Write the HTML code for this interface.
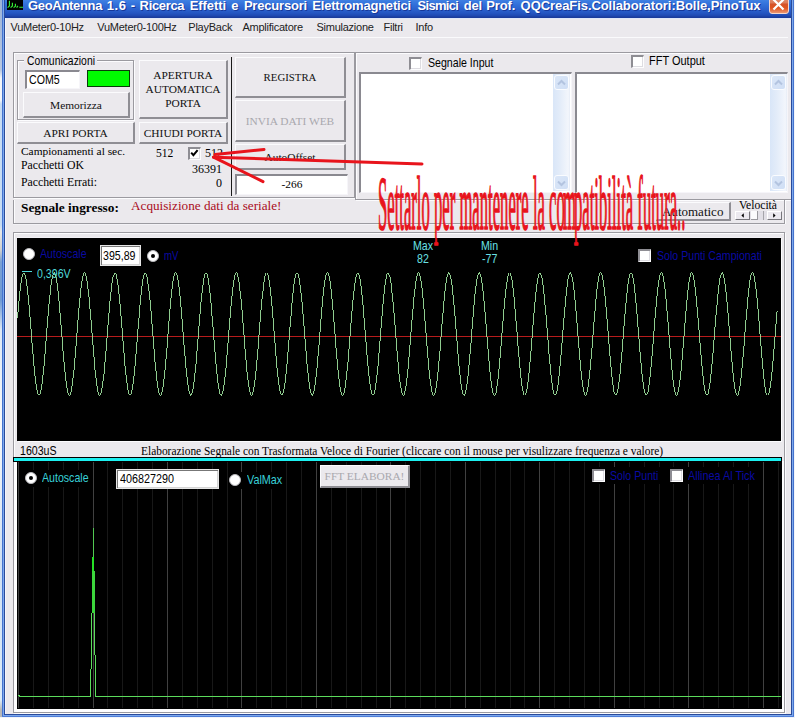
<!DOCTYPE html>
<html>
<head>
<meta charset="utf-8">
<title>GeoAntenna</title>
<style>
html,body{margin:0;padding:0;}
body{width:795px;height:718px;overflow:hidden;position:relative;background:#ebe9ed;font-family:"Liberation Sans",sans-serif;font-size:11px;color:#000;}
.a{position:absolute;box-sizing:border-box;}
.t{position:absolute;white-space:nowrap;line-height:1;}
.ms{font-size:12.4px;transform-origin:0 0;transform:scaleX(0.856);}
.sf{font-family:"Liberation Serif",serif;}
.btn{position:absolute;box-sizing:border-box;background:#ebe9ed;border-top:1px solid #fbfbfd;border-left:1px solid #fbfbfd;border-right:2px solid #8f8e94;border-bottom:2px solid #8f8e94;font-family:"Liberation Serif",serif;font-size:11.4px;text-align:center;color:#111;}
.btn span{position:absolute;left:0;right:0;text-align:center;line-height:14px;}
.sunk{position:absolute;box-sizing:border-box;background:#fff;border-top:2px solid #8a8990;border-left:2px solid #8a8990;border-right:1px solid #f6f5f9;border-bottom:1px solid #f6f5f9;}
.et{position:absolute;box-sizing:border-box;border:1px solid #9b9aa0;box-shadow:1px 1px 0 #fcfcfe, inset 1px 1px 0 #fcfcfe;}
.sb{background:linear-gradient(90deg,#d9e6f8 0%,#e3ecf9 40%,#f3f6fc 90%,#e6ecf6 100%);}
.sbb{width:15px;height:15px;border:1px solid #fafcff;border-radius:3px;background:linear-gradient(135deg,#dbe7f8,#cfdef5);}
.cb{position:absolute;box-sizing:border-box;width:13px;height:13px;background:#fff;border-top:2px solid #8e8d93;border-left:2px solid #8e8d93;border-right:1px solid #fdfdfe;border-bottom:1px solid #fdfdfe;box-shadow:inset -1px -1px 0 #dddce1;}
.rd{position:absolute;box-sizing:border-box;width:12px;height:12px;border-radius:50%;background:#fff;border:1.5px solid #b9b9bd;}
.rd.on:after{content:"";position:absolute;left:2.5px;top:2.5px;width:4px;height:4px;border-radius:50%;background:#000;}
</style>
</head>
<body>
<!-- desktop strip left/right/bottom -->
<div class="a" id="deskL" style="left:0;top:0;width:2px;height:718px;background:linear-gradient(#9db4d8 0,#b9c8e2 70px,#f4f6fa 78px,#f4f6fa 100px,#c7dcf4 104px,#c7dcf4 225px,#e8e8e8 232px,#d0d0d0 250px,#7aa0d4 262px,#6f9ad4 300px,#dfe9f6 330px,#f6f8fb 420px,#e4ecf6 500px,#cfe0f4 560px,#dcebf8 700px,#b8b8b8 710px);"></div>
<div class="a" id="deskR" style="left:794px;top:0;width:1px;height:718px;background:#f1f4f9;"></div>
<div class="a" id="deskB" style="left:0;top:717px;width:795px;height:1px;background:#f1f4f9;"></div>

<!-- title bar -->
<div class="a" id="title" style="left:5px;top:0;width:786px;height:18px;background:linear-gradient(#3f80e3 0px,#3372db 4px,#2b62ce 9px,#2456c2 13px,#1e48b0 16px,#1a3c9c 17px,#1a3c9c 18px);"></div>
<div class="a" id="icon" style="left:7px;top:0;width:16px;height:10px;background:#000;"></div>
<svg class="a" style="left:7px;top:0;" width="16" height="10" viewBox="7 0 16 10"><path d="M9.4,0.8 L9.4,6 L7.6,7.6 M12.4,2.8 L12.4,6 L10.6,7.6 M15.4,3.8 L15.4,6.2 L13.6,7.6 M17.9,5.8 L16.6,7.6 M19.3,7.2 L23,7.2" stroke="#36f036" stroke-width="1.15" fill="none"/></svg>
<div class="t" id="ttext" style="left:28px;top:-1px;width:740px;height:14px;font-size:13px;font-weight:bold;color:#fff;text-shadow:1px 1px 0 #16389a;"><span style="position:absolute;left:0.0px;top:0;letter-spacing:-0.320px;">GeoAntenna</span><span style="position:absolute;left:78.7px;top:0;letter-spacing:0.567px;">1.6</span><span style="position:absolute;left:102.8px;top:0;letter-spacing:-0.400px;">-</span><span style="position:absolute;left:111.6px;top:0;letter-spacing:-0.329px;">Ricerca</span><span style="position:absolute;left:161.8px;top:0;letter-spacing:-0.100px;">Effetti</span><span style="position:absolute;left:203.3px;top:0;letter-spacing:-0.700px;">e</span><span style="position:absolute;left:215.9px;top:0;letter-spacing:-0.200px;">Precursori</span><span style="position:absolute;left:284.3px;top:0;letter-spacing:-0.206px;">Elettromagnetici</span><span style="position:absolute;left:389.6px;top:0;letter-spacing:-0.714px;">Sismici</span><span style="position:absolute;left:435.7px;top:0;letter-spacing:-0.167px;">del</span><span style="position:absolute;left:458.3px;top:0;letter-spacing:-0.120px;">Prof.</span><span style="position:absolute;left:492.6px;top:0;letter-spacing:-0.070px;">QQCreaFis.Collaboratori:Bolle,PinoTux</span></div>
<div class="a" id="close" style="left:769px;top:-1px;width:20px;height:15px;background:linear-gradient(#e08868 0,#dc7a58 3px,#d4522a 4px,#e0541f 8px,#e88a62 12px,#eea88c 15px);border:1px solid #f5d6ca;border-radius:0 0 3px 3px;"></div>
<svg class="a" style="left:769px;top:0;" width="20" height="14" viewBox="0 0 20 14"><path d="M4 -1 L14.5 9.5 M15 -1 L4.5 9.5" stroke="#fff" stroke-width="2.2" fill="none"/></svg>

<!-- menu -->
<div class="a" style="left:5px;top:18px;width:786px;height:1px;background:#dfe7f8;"></div>
<div class="t" style="left:10.5px;top:22px;font-size:11px;color:#222;letter-spacing:-0.25px;">VuMeter0-10Hz</div>
<div class="t" style="left:97.3px;top:22px;font-size:11px;color:#222;letter-spacing:-0.25px;">VuMeter0-100Hz</div>
<div class="t" style="left:188.3px;top:22px;font-size:11px;color:#222;letter-spacing:-0.25px;">PlayBack</div>
<div class="t" style="left:242.5px;top:22px;font-size:11px;color:#222;letter-spacing:-0.25px;">Amplificatore</div>
<div class="t" style="left:316.5px;top:22px;font-size:11px;color:#222;letter-spacing:-0.25px;">Simulazione</div>
<div class="t" style="left:383.5px;top:22px;font-size:11px;color:#222;letter-spacing:-0.25px;">Filtri</div>
<div class="t" style="left:415.5px;top:22px;font-size:11px;color:#222;letter-spacing:-0.25px;">Info</div>
<div class="a" style="left:6px;top:37px;width:782px;height:1px;background:#fafafc;"></div>

<!-- ===== top-left panel ===== -->
<div class="et" id="pL" style="left:13px;top:52px;width:342px;height:146px;"></div>
<!-- groupbox -->
<div class="et" style="left:17px;top:60px;width:117px;height:60px;"></div>
<div class="a" style="left:24px;top:58px;width:73px;height:6px;background:#ebe9ed;"></div><div class="t ms" style="left:27px;top:55px;transform:scaleX(0.836);">Comunicazioni</div>
<div class="sunk" style="left:25px;top:70px;width:55px;height:19px;"></div>
<div class="t ms" style="left:29px;top:74px;">COM5</div>
<div class="a" style="left:87px;top:70px;width:43px;height:17px;background:#00fb00;border:1px solid #0a3a0a;"></div>
<div class="btn" style="left:23px;top:92px;width:107px;height:26px;"><span style="top:5px;">Memorizza</span></div>
<div class="btn" style="left:139px;top:60px;width:89px;height:59px;"><span style="top:7px;">APERTURA<br>AUTOMATICA<br>PORTA</span></div>
<div class="btn" style="left:17px;top:122px;width:118px;height:22px;"><span style="top:2.8px;">APRI PORTA</span></div>
<div class="btn" style="left:139px;top:122px;width:89px;height:22px;"><span style="top:2.8px;">CHIUDI PORTA</span></div>
<div class="a" style="left:231px;top:57px;width:1px;height:139px;background:#1a1a1a;"></div>
<div class="btn" style="left:235px;top:57px;width:111px;height:41px;"><span style="top:11.6px;font-size:10.8px;">REGISTRA</span></div>
<div class="btn" style="left:235px;top:100px;width:111px;height:42px;color:#a9a8ad;"><span style="top:12.5px;">INVIA DATI WEB</span></div>
<div class="btn" style="left:235px;top:144px;width:111px;height:26px;"><span style="top:5px;">AutoOffset</span></div>
<div class="sunk" style="left:235px;top:174px;width:113px;height:21px;"></div>
<div class="t sf" style="left:236px;width:112px;text-align:center;top:179px;font-size:11.4px;">-266</div>

<div class="t sf" style="left:21px;top:146px;font-size:11.4px;">Campionamenti al sec.</div>
<div class="t sf" style="left:156px;top:148px;font-size:11.6px;">512</div>
<div class="cb" style="left:188px;top:147px;"></div>
<svg class="a" style="left:188px;top:147px;" width="12" height="12" viewBox="0 0 12 12"><path d="M3.2 5.6 L5.4 8.2 L9.6 3.2" stroke="#000" stroke-width="2" fill="none"/></svg>
<div class="t sf" style="left:205px;top:147px;font-size:12px;">512</div>
<div class="t sf" style="left:21px;top:160px;font-size:11.75px;">Pacchetti OK</div>
<div class="t sf" style="left:150px;width:72px;text-align:right;top:163px;font-size:12px;">36391</div>
<div class="t sf" style="left:21px;top:176.5px;font-size:11.75px;">Pacchetti Errati:</div>
<div class="t sf" style="left:150px;width:72px;text-align:right;top:177px;font-size:12px;">0</div>

<!-- ===== top-right panel ===== -->
<div class="et" id="pR" style="left:355px;top:52px;width:438px;height:148px;"></div>
<div class="cb" style="left:409px;top:57px;"></div>
<div class="t ms" style="left:427.5px;top:57px;">Segnale Input</div>
<div class="cb" style="left:631px;top:55px;"></div>
<div class="t ms" style="left:649px;top:55px;transform:scaleX(0.886);">FFT Output</div>
<div class="sunk" id="ta1" style="left:359px;top:72px;width:213px;height:121px;"></div>
<div class="sunk" id="ta2" style="left:575px;top:72px;width:213px;height:121px;"></div>
<div class="a sb" style="left:553px;top:74px;width:17px;height:117px;">
<div class="a sbb" style="left:1px;top:1px;"><svg width="13" height="14" viewBox="0 0 13 14"><path d="M3 8.5 L6.5 5 L10 8.5" stroke="#b3c4e0" stroke-width="2" fill="none"/></svg></div>
<div class="a sbb" style="left:1px;top:101px;"><svg width="13" height="14" viewBox="0 0 13 14"><path d="M3 5.5 L6.5 9 L10 5.5" stroke="#b3c4e0" stroke-width="2" fill="none"/></svg></div>
</div>
<div class="a sb" style="left:770px;top:74px;width:17px;height:117px;">
<div class="a sbb" style="left:1px;top:1px;"><svg width="13" height="14" viewBox="0 0 13 14"><path d="M3 8.5 L6.5 5 L10 8.5" stroke="#b3c4e0" stroke-width="2" fill="none"/></svg></div>
<div class="a sbb" style="left:1px;top:101px;"><svg width="13" height="14" viewBox="0 0 13 14"><path d="M3 5.5 L6.5 9 L10 5.5" stroke="#b3c4e0" stroke-width="2" fill="none"/></svg></div>
</div>

<!-- ===== status row ===== -->
<div class="et" id="pS" style="left:13px;top:200px;width:772px;height:24px;border-top:none;box-shadow:1px 0 0 #fcfcfe, 0 1px 0 #f3f2f6, inset 1px 0 0 #fcfcfe;"></div>
<div class="t sf" style="left:21px;top:201px;font-size:13.33px;font-weight:bold;">Segnale ingresso:</div>
<div class="t sf" style="left:131px;top:199px;font-size:13.2px;color:#aa0c1c;">Acquisizione dati da seriale!</div>
<div class="btn" style="left:656px;top:202px;width:75px;height:19px;font-size:13px;"><span style="top:1.5px;left:5px;right:auto;">Automatico</span></div>
<div class="t sf" style="left:739px;top:200px;font-size:11.6px;">Velocità</div>
<div class="a" id="slider" style="left:735px;top:211px;width:47px;height:9px;background:#e1dfe6;">
<div class="a" style="left:0;top:0;width:15px;height:9px;background:#ebe9ef;border-top:1px solid #fff;border-left:1px solid #fff;border-right:1px solid #77767c;border-bottom:1px solid #77767c;"></div>
<div class="a" style="left:32px;top:0;width:15px;height:9px;background:#ebe9ef;border-top:1px solid #fff;border-left:1px solid #fff;border-right:1px solid #77767c;border-bottom:1px solid #77767c;"></div>
<div class="a" style="left:16px;top:0;width:7px;height:9px;background:#fbfbfd;border-right:1px solid #9a999f;border-bottom:1px solid #9a999f;"></div>
<div class="a" style="left:28px;top:0;width:1px;height:9px;background:#a5a4aa;"></div>
<svg class="a" style="left:0;top:0;" width="47" height="9" viewBox="0 0 47 9"><path d="M8.8 2.3 L6.4 4.5 L8.8 6.7 Z M38.2 2.3 L40.6 4.5 L38.2 6.7 Z" fill="#000"/></svg>
</div>

<!-- ===== scope container ===== -->
<div class="et" id="scopeBox" style="left:13px;top:232px;width:772px;height:481px;"></div>
<div class="a" id="scope1" style="left:17px;top:238px;width:764px;height:203px;background:#000;box-shadow:1px 1px 0 #fbfbfd,0 -1px 0 #f1f0f5;"></div>
<div class="a" id="fftwhite" style="left:14px;top:461px;width:770px;height:251px;background:#fdfdfe;"></div>
<div class="a" id="scope2" style="left:17px;top:461px;width:765px;height:248px;background:#000;"></div>
<div class="a" id="cyan" style="left:13px;top:457px;width:769px;height:5px;background:#1cf0f0;border:1px solid #000;"></div>
<div class="t ms" style="left:19.5px;top:445px;">1603uS</div>
<div class="t sf" style="left:141px;top:446px;font-size:11.41px;">Elaborazione Segnale con Trasformata Veloce di Fourier (cliccare con il mouse per visulizzare frequenza e valore)</div>

<svg class="a" id="plots" style="left:0;top:0;" width="795" height="718" viewBox="0 0 795 718">
<g shape-rendering="crispEdges" stroke-width="1">
<line x1="18.5" y1="462" x2="18.5" y2="708" stroke="#404040"/>
<line x1="33.5" y1="462" x2="33.5" y2="708" stroke="#181818"/>
<line x1="48.5" y1="462" x2="48.5" y2="708" stroke="#181818"/>
<line x1="63.5" y1="462" x2="63.5" y2="708" stroke="#181818"/>
<line x1="78.5" y1="462" x2="78.5" y2="708" stroke="#181818"/>
<line x1="93.5" y1="462" x2="93.5" y2="708" stroke="#404040"/>
<line x1="107.5" y1="462" x2="107.5" y2="708" stroke="#181818"/>
<line x1="122.5" y1="462" x2="122.5" y2="708" stroke="#181818"/>
<line x1="137.5" y1="462" x2="137.5" y2="708" stroke="#181818"/>
<line x1="152.5" y1="462" x2="152.5" y2="708" stroke="#181818"/>
<line x1="167.5" y1="462" x2="167.5" y2="708" stroke="#404040"/>
<line x1="182.5" y1="462" x2="182.5" y2="708" stroke="#181818"/>
<line x1="197.5" y1="462" x2="197.5" y2="708" stroke="#181818"/>
<line x1="212.5" y1="462" x2="212.5" y2="708" stroke="#181818"/>
<line x1="227.5" y1="462" x2="227.5" y2="708" stroke="#181818"/>
<line x1="241.5" y1="462" x2="241.5" y2="708" stroke="#404040"/>
<line x1="256.5" y1="462" x2="256.5" y2="708" stroke="#181818"/>
<line x1="271.5" y1="462" x2="271.5" y2="708" stroke="#181818"/>
<line x1="286.5" y1="462" x2="286.5" y2="708" stroke="#181818"/>
<line x1="301.5" y1="462" x2="301.5" y2="708" stroke="#181818"/>
<line x1="316.5" y1="462" x2="316.5" y2="708" stroke="#404040"/>
<line x1="331.5" y1="462" x2="331.5" y2="708" stroke="#181818"/>
<line x1="346.5" y1="462" x2="346.5" y2="708" stroke="#181818"/>
<line x1="361.5" y1="462" x2="361.5" y2="708" stroke="#181818"/>
<line x1="376.5" y1="462" x2="376.5" y2="708" stroke="#181818"/>
<line x1="390.5" y1="462" x2="390.5" y2="708" stroke="#404040"/>
<line x1="405.5" y1="462" x2="405.5" y2="708" stroke="#181818"/>
<line x1="420.5" y1="462" x2="420.5" y2="708" stroke="#181818"/>
<line x1="435.5" y1="462" x2="435.5" y2="708" stroke="#181818"/>
<line x1="450.5" y1="462" x2="450.5" y2="708" stroke="#181818"/>
<line x1="465.5" y1="462" x2="465.5" y2="708" stroke="#404040"/>
<line x1="480.5" y1="462" x2="480.5" y2="708" stroke="#181818"/>
<line x1="495.5" y1="462" x2="495.5" y2="708" stroke="#181818"/>
<line x1="510.5" y1="462" x2="510.5" y2="708" stroke="#181818"/>
<line x1="524.5" y1="462" x2="524.5" y2="708" stroke="#181818"/>
<line x1="539.5" y1="462" x2="539.5" y2="708" stroke="#404040"/>
<line x1="554.5" y1="462" x2="554.5" y2="708" stroke="#181818"/>
<line x1="569.5" y1="462" x2="569.5" y2="708" stroke="#181818"/>
<line x1="584.5" y1="462" x2="584.5" y2="708" stroke="#181818"/>
<line x1="599.5" y1="462" x2="599.5" y2="708" stroke="#181818"/>
<line x1="614.5" y1="462" x2="614.5" y2="708" stroke="#404040"/>
<line x1="629.5" y1="462" x2="629.5" y2="708" stroke="#181818"/>
<line x1="644.5" y1="462" x2="644.5" y2="708" stroke="#181818"/>
<line x1="659.5" y1="462" x2="659.5" y2="708" stroke="#181818"/>
<line x1="673.5" y1="462" x2="673.5" y2="708" stroke="#181818"/>
<line x1="688.5" y1="462" x2="688.5" y2="708" stroke="#404040"/>
<line x1="703.5" y1="462" x2="703.5" y2="708" stroke="#181818"/>
<line x1="718.5" y1="462" x2="718.5" y2="708" stroke="#181818"/>
<line x1="733.5" y1="462" x2="733.5" y2="708" stroke="#181818"/>
<line x1="748.5" y1="462" x2="748.5" y2="708" stroke="#181818"/>
<line x1="763.5" y1="462" x2="763.5" y2="708" stroke="#404040"/>
<line x1="778.5" y1="462" x2="778.5" y2="708" stroke="#181818"/>
<line x1="17" y1="336.5" x2="781" y2="336.5" stroke="#b81c1c"/>
<rect x="93" y="528" width="1" height="29" fill="#52c852"/>
<rect x="92" y="557" width="2" height="14" fill="#25e025"/>
<rect x="92" y="571" width="3" height="42" fill="#3cd63c"/>
<rect x="91" y="613" width="1" height="56" fill="#5cdc5c"/>
<rect x="90" y="669" width="1" height="28" fill="#5cdc5c"/>
<rect x="94" y="613" width="1" height="42" fill="#5cdc5c"/>
<rect x="95" y="655" width="1" height="42" fill="#5cdc5c"/>
<rect x="19" y="696" width="72" height="1" fill="#5cdc5c"/>
<rect x="95" y="696" width="686" height="1" fill="#5cdc5c"/>
<rect x="18" y="695" width="2" height="1" fill="#5cdc5c"/>
</g>
<path id="sine" d="M17.5,317.8 L18.1,310.6 L18.7,303.8 L19.3,297.4 L19.9,291.6 L20.5,286.4 L21.1,282.0 L21.7,278.4 L22.3,275.6 L22.9,273.8 L23.5,272.8 L24.1,272.8 L24.7,273.8 L25.3,275.6 L25.9,278.4 L26.5,282.0 L27.1,286.4 L27.7,291.6 L28.3,297.4 L28.9,303.8 L29.5,310.6 L30.1,317.8 L30.7,325.3 L31.3,332.9 L31.9,340.5 L32.5,348.0 L33.1,355.2 L33.7,362.2 L34.3,368.7 L34.9,374.7 L35.5,380.1 L36.1,384.7 L36.7,388.6 L37.3,391.6 L37.9,393.8 L38.5,395.0 L39.1,395.3 L39.7,394.6 L40.3,393.0 L40.9,390.5 L41.5,387.2 L42.1,383.0 L42.7,378.0 L43.3,372.4 L43.9,366.2 L44.5,359.5 L45.1,352.4 L45.7,345.0 L46.3,337.4 L46.9,329.8 L47.5,322.3 L48.1,314.9 L48.7,307.8 L49.3,301.2 L49.9,295.0 L50.5,289.5 L51.1,284.6 L51.7,280.5 L52.3,277.2 L52.9,274.8 L53.5,273.3 L54.1,272.7 L54.7,273.1 L55.3,274.4 L55.9,276.6 L56.5,279.7 L57.1,283.7 L57.7,288.4 L58.3,293.9 L58.9,299.9 L59.5,306.5 L60.1,313.5 L60.7,320.8 L61.3,328.3 L61.9,335.9 L62.5,343.5 L63.1,350.9 L63.7,358.1 L64.3,364.9 L64.9,371.2 L65.5,376.9 L66.1,382.0 L66.7,386.4 L67.3,389.9 L67.9,392.6 L68.5,394.4 L69.1,395.2 L69.7,395.1 L70.3,394.1 L70.9,392.1 L71.5,389.3 L72.1,385.6 L72.7,381.1 L73.3,375.8 L73.9,370.0 L74.5,363.5 L75.1,356.7 L75.7,349.4 L76.3,342.0 L76.9,334.4 L77.5,326.8 L78.1,319.3 L78.7,312.0 L79.3,305.1 L79.9,298.6 L80.5,292.7 L81.1,287.4 L81.7,282.8 L82.3,279.1 L82.9,276.1 L83.5,274.1 L84.1,272.9 L84.7,272.7 L85.3,273.5 L85.9,275.2 L86.5,277.8 L87.1,281.2 L87.7,285.5 L88.3,290.5 L88.9,296.2 L89.5,302.5 L90.1,309.2 L90.7,316.4 L91.3,323.8 L91.9,331.3 L92.5,338.9 L93.1,346.5 L93.7,353.8 L94.3,360.8 L94.9,367.5 L95.5,373.6 L96.1,379.1 L96.7,383.9 L97.3,387.9 L97.9,391.1 L98.5,393.4 L99.1,394.8 L99.7,395.3 L100.3,394.8 L100.9,393.4 L101.5,391.1 L102.1,387.9 L102.7,383.9 L103.3,379.1 L103.9,373.6 L104.5,367.5 L105.1,360.8 L105.7,353.8 L106.3,346.5 L106.9,338.9 L107.5,331.3 L108.1,323.8 L108.7,316.4 L109.3,309.2 L109.9,302.5 L110.5,296.2 L111.1,290.5 L111.7,285.5 L112.3,281.2 L112.9,277.8 L113.5,275.2 L114.1,273.5 L114.7,272.7 L115.3,272.9 L115.9,274.1 L116.5,276.1 L117.1,279.1 L117.7,282.8 L118.3,287.4 L118.9,292.7 L119.5,298.6 L120.1,305.1 L120.7,312.0 L121.3,319.3 L121.9,326.8 L122.5,334.4 L123.1,342.0 L123.7,349.4 L124.3,356.7 L124.9,363.5 L125.5,370.0 L126.1,375.8 L126.7,381.1 L127.3,385.6 L127.9,389.3 L128.5,392.1 L129.1,394.1 L129.7,395.1 L130.3,395.2 L130.9,394.4 L131.5,392.6 L132.1,389.9 L132.7,386.4 L133.3,382.0 L133.9,376.9 L134.5,371.2 L135.1,364.9 L135.7,358.1 L136.3,350.9 L136.9,343.5 L137.5,335.9 L138.1,328.3 L138.7,320.8 L139.3,313.5 L139.9,306.5 L140.5,299.9 L141.1,293.9 L141.7,288.4 L142.3,283.7 L142.9,279.7 L143.5,276.6 L144.1,274.4 L144.7,273.1 L145.3,272.7 L145.9,273.3 L146.5,274.8 L147.1,277.2 L147.7,280.5 L148.3,284.6 L148.9,289.5 L149.5,295.0 L150.1,301.2 L150.7,307.8 L151.3,314.9 L151.9,322.3 L152.5,329.8 L153.1,337.4 L153.7,345.0 L154.3,352.4 L154.9,359.5 L155.5,366.2 L156.1,372.4 L156.7,378.0 L157.3,383.0 L157.9,387.2 L158.5,390.5 L159.1,393.0 L159.7,394.6 L160.3,395.3 L160.9,395.0 L161.5,393.8 L162.1,391.6 L162.7,388.6 L163.3,384.7 L163.9,380.1 L164.5,374.7 L165.1,368.7 L165.7,362.2 L166.3,355.2 L166.9,348.0 L167.5,340.5 L168.1,332.9 L168.7,325.3 L169.3,317.8 L169.9,310.6 L170.5,303.8 L171.1,297.4 L171.7,291.6 L172.3,286.4 L172.9,282.0 L173.5,278.4 L174.1,275.6 L174.7,273.8 L175.3,272.8 L175.9,272.8 L176.5,273.8 L177.1,275.6 L177.7,278.4 L178.3,282.0 L178.9,286.4 L179.5,291.6 L180.1,297.4 L180.7,303.8 L181.3,310.6 L181.9,317.8 L182.5,325.3 L183.1,332.9 L183.7,340.5 L184.3,348.0 L184.9,355.2 L185.5,362.2 L186.1,368.7 L186.7,374.7 L187.3,380.1 L187.9,384.7 L188.5,388.6 L189.1,391.6 L189.7,393.8 L190.3,395.0 L190.9,395.3 L191.5,394.6 L192.1,393.0 L192.7,390.5 L193.3,387.2 L193.9,383.0 L194.5,378.0 L195.1,372.4 L195.7,366.2 L196.3,359.5 L196.9,352.4 L197.5,345.0 L198.1,337.4 L198.7,329.8 L199.3,322.3 L199.9,314.9 L200.5,307.8 L201.1,301.2 L201.7,295.0 L202.3,289.5 L202.9,284.6 L203.5,280.5 L204.1,277.2 L204.7,274.8 L205.3,273.3 L205.9,272.7 L206.5,273.1 L207.1,274.4 L207.7,276.6 L208.3,279.7 L208.9,283.7 L209.5,288.4 L210.1,293.9 L210.7,299.9 L211.3,306.5 L211.9,313.5 L212.5,320.8 L213.1,328.3 L213.7,335.9 L214.3,343.5 L214.9,350.9 L215.5,358.1 L216.1,364.9 L216.7,371.2 L217.3,376.9 L217.9,382.0 L218.5,386.4 L219.1,389.9 L219.7,392.6 L220.3,394.4 L220.9,395.2 L221.5,395.1 L222.1,394.1 L222.7,392.1 L223.3,389.3 L223.9,385.6 L224.5,381.1 L225.1,375.8 L225.7,370.0 L226.3,363.5 L226.9,356.7 L227.5,349.4 L228.1,342.0 L228.7,334.4 L229.3,326.8 L229.9,319.3 L230.5,312.0 L231.1,305.1 L231.7,298.6 L232.3,292.7 L232.9,287.4 L233.5,282.8 L234.1,279.1 L234.7,276.1 L235.3,274.1 L235.9,272.9 L236.5,272.7 L237.1,273.5 L237.7,275.2 L238.3,277.8 L238.9,281.2 L239.5,285.5 L240.1,290.5 L240.7,296.2 L241.3,302.5 L241.9,309.2 L242.5,316.4 L243.1,323.8 L243.7,331.3 L244.3,338.9 L244.9,346.5 L245.5,353.8 L246.1,360.8 L246.7,367.5 L247.3,373.6 L247.9,379.1 L248.5,383.9 L249.1,387.9 L249.7,391.1 L250.3,393.4 L250.9,394.8 L251.5,395.3 L252.1,394.8 L252.7,393.4 L253.3,391.1 L253.9,387.9 L254.5,383.9 L255.1,379.1 L255.7,373.6 L256.3,367.5 L256.9,360.8 L257.5,353.8 L258.1,346.5 L258.7,338.9 L259.3,331.3 L259.9,323.8 L260.5,316.4 L261.1,309.2 L261.7,302.5 L262.3,296.2 L262.9,290.5 L263.5,285.5 L264.1,281.2 L264.7,277.8 L265.3,275.2 L265.9,273.5 L266.5,272.7 L267.1,272.9 L267.7,274.1 L268.3,276.1 L268.9,279.1 L269.5,282.8 L270.1,287.4 L270.7,292.7 L271.3,298.6 L271.9,305.1 L272.5,312.0 L273.1,319.3 L273.7,326.8 L274.3,334.4 L274.9,342.0 L275.5,349.4 L276.1,356.7 L276.7,363.5 L277.3,370.0 L277.9,375.8 L278.5,381.1 L279.1,385.6 L279.7,389.3 L280.3,392.1 L280.9,394.1 L281.5,395.1 L282.1,395.2 L282.7,394.4 L283.3,392.6 L283.9,389.9 L284.5,386.4 L285.1,382.0 L285.7,376.9 L286.3,371.2 L286.9,364.9 L287.5,358.1 L288.1,350.9 L288.7,343.5 L289.3,335.9 L289.9,328.3 L290.5,320.8 L291.1,313.5 L291.7,306.5 L292.3,299.9 L292.9,293.9 L293.5,288.4 L294.1,283.7 L294.7,279.7 L295.3,276.6 L295.9,274.4 L296.5,273.1 L297.1,272.7 L297.7,273.3 L298.3,274.8 L298.9,277.2 L299.5,280.5 L300.1,284.6 L300.7,289.5 L301.3,295.0 L301.9,301.2 L302.5,307.8 L303.1,314.9 L303.7,322.3 L304.3,329.8 L304.9,337.4 L305.5,345.0 L306.1,352.4 L306.7,359.5 L307.3,366.2 L307.9,372.4 L308.5,378.0 L309.1,383.0 L309.7,387.2 L310.3,390.5 L310.9,393.0 L311.5,394.6 L312.1,395.3 L312.7,395.0 L313.3,393.8 L313.9,391.6 L314.5,388.6 L315.1,384.7 L315.7,380.1 L316.3,374.7 L316.9,368.7 L317.5,362.2 L318.1,355.2 L318.7,348.0 L319.3,340.5 L319.9,332.9 L320.5,325.3 L321.1,317.8 L321.7,310.6 L322.3,303.8 L322.9,297.4 L323.5,291.6 L324.1,286.4 L324.7,282.0 L325.3,278.4 L325.9,275.6 L326.5,273.8 L327.1,272.8 L327.7,272.8 L328.3,273.8 L328.9,275.6 L329.5,278.4 L330.1,282.0 L330.7,286.4 L331.3,291.6 L331.9,297.4 L332.5,303.8 L333.1,310.6 L333.7,317.8 L334.3,325.3 L334.9,332.9 L335.5,340.5 L336.1,348.0 L336.7,355.2 L337.3,362.2 L337.9,368.7 L338.5,374.7 L339.1,380.1 L339.7,384.7 L340.3,388.6 L340.9,391.6 L341.5,393.8 L342.1,395.0 L342.7,395.3 L343.3,394.6 L343.9,393.0 L344.5,390.5 L345.1,387.2 L345.7,383.0 L346.3,378.0 L346.9,372.4 L347.5,366.2 L348.1,359.5 L348.7,352.4 L349.3,345.0 L349.9,337.4 L350.5,329.8 L351.1,322.3 L351.7,314.9 L352.3,307.8 L352.9,301.2 L353.5,295.0 L354.1,289.5 L354.7,284.6 L355.3,280.5 L355.9,277.2 L356.5,274.8 L357.1,273.3 L357.7,272.7 L358.3,273.1 L358.9,274.4 L359.5,276.6 L360.1,279.7 L360.7,283.7 L361.3,288.4 L361.9,293.9 L362.5,299.9 L363.1,306.5 L363.7,313.5 L364.3,320.8 L364.9,328.3 L365.5,335.9 L366.1,343.5 L366.7,350.9 L367.3,358.1 L367.9,364.9 L368.5,371.2 L369.1,376.9 L369.7,382.0 L370.3,386.4 L370.9,389.9 L371.5,392.6 L372.1,394.4 L372.7,395.2 L373.3,395.1 L373.9,394.1 L374.5,392.1 L375.1,389.3 L375.7,385.6 L376.3,381.1 L376.9,375.8 L377.5,370.0 L378.1,363.5 L378.7,356.7 L379.3,349.4 L379.9,342.0 L380.5,334.4 L381.1,326.8 L381.7,319.3 L382.3,312.0 L382.9,305.1 L383.5,298.6 L384.1,292.7 L384.7,287.4 L385.3,282.8 L385.9,279.1 L386.5,276.1 L387.1,274.1 L387.7,272.9 L388.3,272.7 L388.9,273.5 L389.5,275.2 L390.1,277.8 L390.7,281.2 L391.3,285.5 L391.9,290.5 L392.5,296.2 L393.1,302.5 L393.7,309.2 L394.3,316.4 L394.9,323.8 L395.5,331.3 L396.1,338.9 L396.7,346.5 L397.3,353.8 L397.9,360.8 L398.5,367.5 L399.1,373.6 L399.7,379.1 L400.3,383.9 L400.9,387.9 L401.5,391.1 L402.1,393.4 L402.7,394.8 L403.3,395.3 L403.9,394.8 L404.5,393.4 L405.1,391.1 L405.7,387.9 L406.3,383.9 L406.9,379.1 L407.5,373.6 L408.1,367.5 L408.7,360.8 L409.3,353.8 L409.9,346.5 L410.5,338.9 L411.1,331.3 L411.7,323.8 L412.3,316.4 L412.9,309.2 L413.5,302.5 L414.1,296.2 L414.7,290.5 L415.3,285.5 L415.9,281.2 L416.5,277.8 L417.1,275.2 L417.7,273.5 L418.3,272.7 L418.9,272.9 L419.5,274.1 L420.1,276.1 L420.7,279.1 L421.3,282.8 L421.9,287.4 L422.5,292.7 L423.1,298.6 L423.7,305.1 L424.3,312.0 L424.9,319.3 L425.5,326.8 L426.1,334.4 L426.7,342.0 L427.3,349.4 L427.9,356.7 L428.5,363.5 L429.1,370.0 L429.7,375.8 L430.3,381.1 L430.9,385.6 L431.5,389.3 L432.1,392.1 L432.7,394.1 L433.3,395.1 L433.9,395.2 L434.5,394.4 L435.1,392.6 L435.7,389.9 L436.3,386.4 L436.9,382.0 L437.5,376.9 L438.1,371.2 L438.7,364.9 L439.3,358.1 L439.9,350.9 L440.5,343.5 L441.1,335.9 L441.7,328.3 L442.3,320.8 L442.9,313.5 L443.5,306.5 L444.1,299.9 L444.7,293.9 L445.3,288.4 L445.9,283.7 L446.5,279.7 L447.1,276.6 L447.7,274.4 L448.3,273.1 L448.9,272.7 L449.5,273.3 L450.1,274.8 L450.7,277.2 L451.3,280.5 L451.9,284.6 L452.5,289.5 L453.1,295.0 L453.7,301.2 L454.3,307.8 L454.9,314.9 L455.5,322.3 L456.1,329.8 L456.7,337.4 L457.3,345.0 L457.9,352.4 L458.5,359.5 L459.1,366.2 L459.7,372.4 L460.3,378.0 L460.9,383.0 L461.5,387.2 L462.1,390.5 L462.7,393.0 L463.3,394.6 L463.9,395.3 L464.5,395.0 L465.1,393.8 L465.7,391.6 L466.3,388.6 L466.9,384.7 L467.5,380.1 L468.1,374.7 L468.7,368.7 L469.3,362.2 L469.9,355.2 L470.5,348.0 L471.1,340.5 L471.7,332.9 L472.3,325.3 L472.9,317.8 L473.5,310.6 L474.1,303.8 L474.7,297.4 L475.3,291.6 L475.9,286.4 L476.5,282.0 L477.1,278.4 L477.7,275.6 L478.3,273.8 L478.9,272.8 L479.5,272.8 L480.1,273.8 L480.7,275.6 L481.3,278.4 L481.9,282.0 L482.5,286.4 L483.1,291.6 L483.7,297.4 L484.3,303.8 L484.9,310.6 L485.5,317.8 L486.1,325.3 L486.7,332.9 L487.3,340.5 L487.9,348.0 L488.5,355.2 L489.1,362.2 L489.7,368.7 L490.3,374.7 L490.9,380.1 L491.5,384.7 L492.1,388.6 L492.7,391.6 L493.3,393.8 L493.9,395.0 L494.5,395.3 L495.1,394.6 L495.7,393.0 L496.3,390.5 L496.9,387.2 L497.5,383.0 L498.1,378.0 L498.7,372.4 L499.3,366.2 L499.9,359.5 L500.5,352.4 L501.1,345.0 L501.7,337.4 L502.3,329.8 L502.9,322.3 L503.5,314.9 L504.1,307.8 L504.7,301.2 L505.3,295.0 L505.9,289.5 L506.5,284.6 L507.1,280.5 L507.7,277.2 L508.3,274.8 L508.9,273.3 L509.5,272.7 L510.1,273.1 L510.7,274.4 L511.3,276.6 L511.9,279.7 L512.5,283.7 L513.1,288.4 L513.7,293.9 L514.3,299.9 L514.9,306.5 L515.5,313.5 L516.1,320.8 L516.7,328.3 L517.3,335.9 L517.9,343.5 L518.5,350.9 L519.1,358.1 L519.7,364.9 L520.3,371.2 L520.9,376.9 L521.5,382.0 L522.1,386.4 L522.7,389.9 L523.3,392.6 L523.9,394.4 L524.5,395.2 L525.1,395.1 L525.7,394.1 L526.3,392.1 L526.9,389.3 L527.5,385.6 L528.1,381.1 L528.7,375.8 L529.3,370.0 L529.9,363.5 L530.5,356.7 L531.1,349.4 L531.7,342.0 L532.3,334.4 L532.9,326.8 L533.5,319.3 L534.1,312.0 L534.7,305.1 L535.3,298.6 L535.9,292.7 L536.5,287.4 L537.1,282.8 L537.7,279.1 L538.3,276.1 L538.9,274.1 L539.5,272.9 L540.1,272.7 L540.7,273.5 L541.3,275.2 L541.9,277.8 L542.5,281.2 L543.1,285.5 L543.7,290.5 L544.3,296.2 L544.9,302.5 L545.5,309.2 L546.1,316.4 L546.7,323.8 L547.3,331.3 L547.9,338.9 L548.5,346.5 L549.1,353.8 L549.7,360.8 L550.3,367.5 L550.9,373.6 L551.5,379.1 L552.1,383.9 L552.7,387.9 L553.3,391.1 L553.9,393.4 L554.5,394.8 L555.1,395.3 L555.7,394.8 L556.3,393.4 L556.9,391.1 L557.5,387.9 L558.1,383.9 L558.7,379.1 L559.3,373.6 L559.9,367.5 L560.5,360.8 L561.1,353.8 L561.7,346.5 L562.3,338.9 L562.9,331.3 L563.5,323.8 L564.1,316.4 L564.7,309.2 L565.3,302.5 L565.9,296.2 L566.5,290.5 L567.1,285.5 L567.7,281.2 L568.3,277.8 L568.9,275.2 L569.5,273.5 L570.1,272.7 L570.7,272.9 L571.3,274.1 L571.9,276.1 L572.5,279.1 L573.1,282.8 L573.7,287.4 L574.3,292.7 L574.9,298.6 L575.5,305.1 L576.1,312.0 L576.7,319.3 L577.3,326.8 L577.9,334.4 L578.5,342.0 L579.1,349.4 L579.7,356.7 L580.3,363.5 L580.9,370.0 L581.5,375.8 L582.1,381.1 L582.7,385.6 L583.3,389.3 L583.9,392.1 L584.5,394.1 L585.1,395.1 L585.7,395.2 L586.3,394.4 L586.9,392.6 L587.5,389.9 L588.1,386.4 L588.7,382.0 L589.3,376.9 L589.9,371.2 L590.5,364.9 L591.1,358.1 L591.7,350.9 L592.3,343.5 L592.9,335.9 L593.5,328.3 L594.1,320.8 L594.7,313.5 L595.3,306.5 L595.9,299.9 L596.5,293.9 L597.1,288.4 L597.7,283.7 L598.3,279.7 L598.9,276.6 L599.5,274.4 L600.1,273.1 L600.7,272.7 L601.3,273.3 L601.9,274.8 L602.5,277.2 L603.1,280.5 L603.7,284.6 L604.3,289.5 L604.9,295.0 L605.5,301.2 L606.1,307.8 L606.7,314.9 L607.3,322.3 L607.9,329.8 L608.5,337.4 L609.1,345.0 L609.7,352.4 L610.3,359.5 L610.9,366.2 L611.5,372.4 L612.1,378.0 L612.7,383.0 L613.3,387.2 L613.9,390.5 L614.5,393.0 L615.1,394.6 L615.7,395.3 L616.3,395.0 L616.9,393.8 L617.5,391.6 L618.1,388.6 L618.7,384.7 L619.3,380.1 L619.9,374.7 L620.5,368.7 L621.1,362.2 L621.7,355.2 L622.3,348.0 L622.9,340.5 L623.5,332.9 L624.1,325.3 L624.7,317.8 L625.3,310.6 L625.9,303.8 L626.5,297.4 L627.1,291.6 L627.7,286.4 L628.3,282.0 L628.9,278.4 L629.5,275.6 L630.1,273.8 L630.7,272.8 L631.3,272.8 L631.9,273.8 L632.5,275.6 L633.1,278.4 L633.7,282.0 L634.3,286.4 L634.9,291.6 L635.5,297.4 L636.1,303.8 L636.7,310.6 L637.3,317.8 L637.9,325.3 L638.5,332.9 L639.1,340.5 L639.7,348.0 L640.3,355.2 L640.9,362.2 L641.5,368.7 L642.1,374.7 L642.7,380.1 L643.3,384.7 L643.9,388.6 L644.5,391.6 L645.1,393.8 L645.7,395.0 L646.3,395.3 L646.9,394.6 L647.5,393.0 L648.1,390.5 L648.7,387.2 L649.3,383.0 L649.9,378.0 L650.5,372.4 L651.1,366.2 L651.7,359.5 L652.3,352.4 L652.9,345.0 L653.5,337.4 L654.1,329.8 L654.7,322.3 L655.3,314.9 L655.9,307.8 L656.5,301.2 L657.1,295.0 L657.7,289.5 L658.3,284.6 L658.9,280.5 L659.5,277.2 L660.1,274.8 L660.7,273.3 L661.3,272.7 L661.9,273.1 L662.5,274.4 L663.1,276.6 L663.7,279.7 L664.3,283.7 L664.9,288.4 L665.5,293.9 L666.1,299.9 L666.7,306.5 L667.3,313.5 L667.9,320.8 L668.5,328.3 L669.1,335.9 L669.7,343.5 L670.3,350.9 L670.9,358.1 L671.5,364.9 L672.1,371.2 L672.7,376.9 L673.3,382.0 L673.9,386.4 L674.5,389.9 L675.1,392.6 L675.7,394.4 L676.3,395.2 L676.9,395.1 L677.5,394.1 L678.1,392.1 L678.7,389.3 L679.3,385.6 L679.9,381.1 L680.5,375.8 L681.1,370.0 L681.7,363.5 L682.3,356.7 L682.9,349.4 L683.5,342.0 L684.1,334.4 L684.7,326.8 L685.3,319.3 L685.9,312.0 L686.5,305.1 L687.1,298.6 L687.7,292.7 L688.3,287.4 L688.9,282.8 L689.5,279.1 L690.1,276.1 L690.7,274.1 L691.3,272.9 L691.9,272.7 L692.5,273.5 L693.1,275.2 L693.7,277.8 L694.3,281.2 L694.9,285.5 L695.5,290.5 L696.1,296.2 L696.7,302.5 L697.3,309.2 L697.9,316.4 L698.5,323.8 L699.1,331.3 L699.7,338.9 L700.3,346.5 L700.9,353.8 L701.5,360.8 L702.1,367.5 L702.7,373.6 L703.3,379.1 L703.9,383.9 L704.5,387.9 L705.1,391.1 L705.7,393.4 L706.3,394.8 L706.9,395.3 L707.5,394.8 L708.1,393.4 L708.7,391.1 L709.3,387.9 L709.9,383.9 L710.5,379.1 L711.1,373.6 L711.7,367.5 L712.3,360.8 L712.9,353.8 L713.5,346.5 L714.1,338.9 L714.7,331.3 L715.3,323.8 L715.9,316.4 L716.5,309.2 L717.1,302.5 L717.7,296.2 L718.3,290.5 L718.9,285.5 L719.5,281.2 L720.1,277.8 L720.7,275.2 L721.3,273.5 L721.9,272.7 L722.5,272.9 L723.1,274.1 L723.7,276.1 L724.3,279.1 L724.9,282.8 L725.5,287.4 L726.1,292.7 L726.7,298.6 L727.3,305.1 L727.9,312.0 L728.5,319.3 L729.1,326.8 L729.7,334.4 L730.3,342.0 L730.9,349.4 L731.5,356.7 L732.1,363.5 L732.7,370.0 L733.3,375.8 L733.9,381.1 L734.5,385.6 L735.1,389.3 L735.7,392.1 L736.3,394.1 L736.9,395.1 L737.5,395.2 L738.1,394.4 L738.7,392.6 L739.3,389.9 L739.9,386.4 L740.5,382.0 L741.1,376.9 L741.7,371.2 L742.3,364.9 L742.9,358.1 L743.5,350.9 L744.1,343.5 L744.7,335.9 L745.3,328.3 L745.9,320.8 L746.5,313.5 L747.1,306.5 L747.7,299.9 L748.3,293.9 L748.9,288.4 L749.5,283.7 L750.1,279.7 L750.7,276.6 L751.3,274.4 L751.9,273.1 L752.5,272.7 L753.1,273.3 L753.7,274.8 L754.3,277.2 L754.9,280.5 L755.5,284.6 L756.1,289.5 L756.7,295.0 L757.3,301.2 L757.9,307.8 L758.5,314.9 L759.1,322.3 L759.7,329.8 L760.3,337.4 L760.9,345.0 L761.5,352.4 L762.1,359.5 L762.7,366.2 L763.3,372.4 L763.9,378.0 L764.5,383.0 L765.1,387.2 L765.7,390.5 L766.3,393.0 L766.9,394.6 L767.5,395.3 L768.1,395.0 L768.7,393.8 L769.3,391.6 L769.9,388.6 L770.5,384.7 L771.1,380.1 L771.7,374.7 L772.3,368.7 L772.9,362.2 L773.5,355.2 L774.1,348.0 L774.7,340.5 L775.3,332.9 L775.9,325.3 L776.5,317.8 L777.1,310.6" stroke="#a8f0a8" stroke-width="0.85" fill="none" shape-rendering="crispEdges"/>
<!-- red arrow -->
<g stroke="#e8141c" stroke-width="3" fill="none" stroke-linecap="round">
<line x1="213.5" y1="157.2" x2="422" y2="164"/>
<line x1="215" y1="154.5" x2="264" y2="149.4"/>
<line x1="213.5" y1="157.2" x2="263" y2="181.6"/>
</g>
</svg>

<!-- scope 1 controls -->
<div class="rd" style="left:23px;top:248px;"></div>
<div class="t ms" style="left:40px;top:248px;color:#0a0aa2;">Autoscale</div>
<div class="sunk" style="left:100px;top:245px;width:41px;height:21px;border:1px solid #e6e6e6;box-shadow:inset 1px 1px 0 #777,inset -1px -1px 0 #d4d4d4;"></div>
<div class="t ms" style="left:103px;top:250px;">395,89</div>
<div class="rd on" style="left:147px;top:250px;"></div>
<div class="t ms" style="left:164px;top:250px;color:#0a0aa2;transform:scaleX(0.78);">mV</div>
<div class="a" style="left:22px;top:271px;width:10px;height:1px;background:#4fd8d8;"></div><div class="t ms" style="left:36.5px;top:268px;color:#4fd8d8;">0,396V</div>
<div class="t ms" style="left:412.5px;top:240px;color:#6ae0e4;">Max</div>
<div class="t ms" style="left:416.5px;top:253px;color:#6ae0e4;">82</div>
<div class="t ms" style="left:480.5px;top:240px;color:#6ae0e4;">Min</div>
<div class="t ms" style="left:481.5px;top:253px;color:#6ae0e4;">-77</div>
<div class="cb" style="left:638px;top:249px;width:13px;height:13px;"></div>
<div class="t ms" style="left:656.5px;top:250px;color:#0a0aa2;">Solo Punti Campionati</div>

<!-- scope 2 controls -->
<div class="a" style="left:24px;top:470px;width:68px;height:17px;background:#000;"></div>
<div class="a" style="left:228px;top:472px;width:57px;height:17px;background:#000;"></div>
<div class="a" style="left:592px;top:467px;width:70px;height:17px;background:#000;"></div>
<div class="a" style="left:669px;top:467px;width:90px;height:17px;background:#000;"></div>
<div class="rd on" style="left:25px;top:472px;"></div>
<div class="t ms" style="left:42px;top:472px;color:#38d0d8;">Autoscale</div>
<div class="sunk" style="left:116px;top:469px;width:103px;height:20px;border:1px solid #e6e6e6;box-shadow:inset 1px 1px 0 #777,inset -1px -1px 0 #d4d4d4;"></div>
<div class="t ms" style="left:119.5px;top:473px;transform:scaleX(0.871);">406827290</div>
<div class="rd" style="left:229px;top:474px;"></div>
<div class="t ms" style="left:246.5px;top:474px;color:#38d0d8;transform:scaleX(0.873);">ValMax</div>
<div class="btn" style="left:320px;top:465px;width:90px;height:23px;color:#a9a8ad;"><span style="top:3px;">FFT ELABORA!</span></div>
<div class="cb" style="left:592px;top:469px;width:13px;height:13px;"></div>
<div class="t ms" style="left:610px;top:470px;color:#0a0aa2;">Solo Punti</div>
<div class="cb" style="left:670px;top:469px;width:13px;height:13px;"></div>
<div class="t ms" style="left:688px;top:470px;color:#0a0aa2;transform:scaleX(0.875);">Allinea Al Tick</div>

<!-- red stretched annotation -->
<div class="t sf" id="redtxt" style="left:378px;top:166.8px;font-size:22px;color:#e8141c;-webkit-text-stroke:0.5px #e8141c;transform-origin:0 0;transform:scale(0.757,3.45);">Settarlo per mantenere la c<span style="letter-spacing:-2.5px">om</span>patibilità futura..</div>

<!-- window frame -->
<div class="a" style="left:2px;top:0;width:1px;height:717px;background:#4573cf;"></div>
<div class="a" style="left:3px;top:0;width:1px;height:716px;background:#7ca8ec;"></div>
<div class="a" style="left:4px;top:0;width:1px;height:715px;background:#2a4a9a;"></div>
<div class="a" style="left:5px;top:18px;width:1px;height:696px;background:#f6f6fb;"></div>
<div class="a" style="left:793px;top:0;width:1px;height:717px;background:#4573cf;"></div>
<div class="a" style="left:792px;top:0;width:1px;height:716px;background:#7ca8ec;"></div>
<div class="a" style="left:791px;top:0;width:1px;height:715px;background:#2a4a9a;"></div>
<div class="a" style="left:4px;top:714px;width:788px;height:1px;background:#2a4a9a;"></div>
<div class="a" style="left:3px;top:715px;width:790px;height:1px;background:#7ca8ec;"></div>
<div class="a" style="left:2px;top:716px;width:792px;height:1px;background:#4f7ed8;"></div>

</body>
</html>
